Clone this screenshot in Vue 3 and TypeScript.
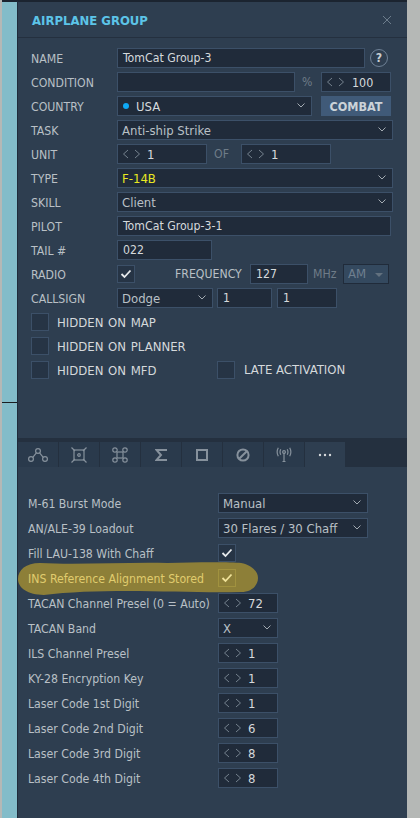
<script setup lang="ts">
const rows2 = [
  { label: "TACAN Band", kind: "select", value: "X" },
  { label: "ILS Channel Presel", kind: "spin", value: "1" },
  { label: "KY-28 Encryption Key", kind: "spin", value: "1" },
  { label: "Laser Code 1st Digit", kind: "spin", value: "1" },
  { label: "Laser Code 2nd Digit", kind: "spin", value: "6" },
  { label: "Laser Code 3rd Digit", kind: "spin", value: "8" },
  { label: "Laser Code 4th Digit", kind: "spin", value: "8" },
];
const hiddenRows = ["HIDDEN ON MAP", "HIDDEN ON PLANNER"];
</script>

<template>
  <div class="page">
    <div class="rail"></div>
    <div class="tick"></div>
    <main class="panel">
      <header class="head">
        <h1>AIRPLANE GROUP</h1>
        <svg class="close" width="10" height="10" viewBox="0 0 10 10"><path d="M1 1l8 8M9 1l-8 8" /></svg>
      </header>

      <section class="form">
        <div class="row">
          <label>NAME</label>
          <div class="field txt" style="width: 248px">TomCat Group-3</div>
          <span class="help">?</span>
        </div>
        <div class="row">
          <label>CONDITION</label>
          <div class="field" style="width: 178px"></div>
          <span class="unit pct">%</span>
          <div class="field spin" style="width: 70px">
            <svg width="18" height="10" viewBox="0 0 18 10"><path d="M5 1L0.5 5L5 9M12 1L16.5 5L12 9" /></svg>
            <span class="spin-val wide">100</span>
          </div>
        </div>
        <div class="row">
          <label>COUNTRY</label>
          <div class="field sel" style="width: 195px">
            <i class="dot"></i><span class="usa">USA</span>
            <svg class="chev" width="8" height="5" viewBox="0 0 8 5"><path d="M0.5 0.5L4 4L7.5 0.5" /></svg>
          </div>
          <button class="combat">COMBAT</button>
        </div>
        <div class="row">
          <label>TASK</label>
          <div class="field sel" style="width: 276px">
            Anti-ship Strike
            <svg class="chev" width="8" height="5" viewBox="0 0 8 5"><path d="M0.5 0.5L4 4L7.5 0.5" /></svg>
          </div>
        </div>
        <div class="row">
          <label>UNIT</label>
          <div class="field spin" style="width: 90px">
            <svg width="18" height="10" viewBox="0 0 18 10"><path d="M5 1L0.5 5L5 9M12 1L16.5 5L12 9" /></svg>
            <span class="spin-val">1</span>
          </div>
          <span class="unit of">OF</span>
          <div class="field spin" style="width: 90px">
            <svg width="18" height="10" viewBox="0 0 18 10"><path d="M5 1L0.5 5L5 9M12 1L16.5 5L12 9" /></svg>
            <span class="spin-val">1</span>
          </div>
        </div>
        <div class="row">
          <label>TYPE</label>
          <div class="field sel yellow" style="width: 276px">
            F-14B
            <svg class="chev" width="8" height="5" viewBox="0 0 8 5"><path d="M0.5 0.5L4 4L7.5 0.5" /></svg>
          </div>
        </div>
        <div class="row">
          <label>SKILL</label>
          <div class="field sel" style="width: 276px">
            Client
            <svg class="chev" width="8" height="5" viewBox="0 0 8 5"><path d="M0.5 0.5L4 4L7.5 0.5" /></svg>
          </div>
        </div>
        <div class="row">
          <label>PILOT</label>
          <div class="field txt" style="width: 274px">TomCat Group-3-1</div>
        </div>
        <div class="row">
          <label>TAIL #</label>
          <div class="field txt" style="width: 95px">022</div>
        </div>
        <div class="row">
          <label>RADIO</label>
          <div class="check">
            <svg width="12" height="10" viewBox="0 0 12 10"><path d="M1.5 5L4.5 8L10.5 1.5" /></svg>
          </div>
          <span class="unit freq">FREQUENCY</span>
          <div class="field txt" style="width: 58px">127</div>
          <span class="unit mhz">MHz</span>
          <div class="am">AM<i></i></div>
        </div>
        <div class="row">
          <label>CALLSIGN</label>
          <div class="field sel" style="width: 96px">
            Dodge
            <svg class="chev" width="8" height="5" viewBox="0 0 8 5"><path d="M0.5 0.5L4 4L7.5 0.5" /></svg>
          </div>
          <div class="field txt" style="width: 55px; margin-left: 4px">1</div>
          <div class="field txt" style="width: 60px; margin-left: 5px">1</div>
        </div>
        <div v-for="name in hiddenRows" :key="name" class="row flag">
          <div class="check"></div>
          <span>{{ name }}</span>
        </div>
        <div class="row flag">
          <div class="check"></div>
          <span class="mfd">HIDDEN ON MFD</span>
          <div class="check late"></div>
          <span class="late-text">LATE ACTIVATION</span>
        </div>
      </section>

      <nav class="tabs">
        <div class="tab">
          <svg width="20" height="14" viewBox="0 0 20 14"><circle cx="3" cy="11" r="2.4" /><circle cx="10" cy="3" r="2.4" /><circle cx="17" cy="11" r="2.4" /><path d="M4.8 9.3L8.4 4.8M11.6 4.8L15.2 9.3" /></svg>
        </div>
        <div class="tab">
          <svg width="16" height="16" viewBox="0 0 16 16"><rect x="3" y="3" width="10" height="10" /><circle cx="8" cy="8" r="1.3" /><path d="M0.5 0.5L4 4M15.5 0.5L12 4M0.5 15.5L4 12M15.5 15.5L12 12" /></svg>
        </div>
        <div class="tab">
          <svg width="16" height="16" viewBox="0 0 16 16"><rect x="5" y="5" width="6" height="6" /><circle cx="3" cy="3" r="2.2" /><circle cx="13" cy="3" r="2.2" /><circle cx="3" cy="13" r="2.2" /><circle cx="13" cy="13" r="2.2" /></svg>
        </div>
        <div class="tab">
          <svg width="12" height="12" viewBox="0 0 12 12"><path class="heavy" d="M11 2V1H1.5L6 6L1.5 11H11V10" /></svg>
        </div>
        <div class="tab">
          <svg width="12" height="12" viewBox="0 0 12 12"><rect class="heavy" x="1" y="1" width="10" height="10" /></svg>
        </div>
        <div class="tab">
          <svg width="14" height="14" viewBox="0 0 14 14"><circle class="heavy" cx="7" cy="7" r="5.6" /><path class="heavy" d="M3.2 10.8L10.8 3.2" /></svg>
        </div>
        <div class="tab">
          <svg width="16" height="15" viewBox="0 0 16 15"><circle cx="8" cy="5" r="1.4" /><path d="M8 6V14.5M6.5 14.5H9.5M4.8 2.2C3.8 4 3.8 6 4.8 7.8M11.2 2.2C12.2 4 12.2 6 11.2 7.8M2.3 0.8C0.8 3.5 0.8 6.5 2.3 9.2M13.7 0.8C15.2 3.5 15.2 6.5 13.7 9.2" /></svg>
        </div>
        <div class="tab active">
          <svg width="14" height="4" viewBox="0 0 14 4"><circle cx="2" cy="2" r="1.2" /><circle cx="7" cy="2" r="1.2" /><circle cx="12" cy="2" r="1.2" /></svg>
        </div>
      </nav>

      <section class="opts">
        <svg class="blob" width="240" height="33" viewBox="0 0 241 33">
          <path d="M0 17C0 8 8 1 22 1C60 3 110 0 150 1C180 0 215 0 224 1C234 3 241 9 241 16C241 24 234 30 224 30C190 31 150 29 110 29C80 29 50 30 26 33C10 33 0 26 0 17Z" />
        </svg>
        <div class="opt">
          <label>M-61 Burst Mode</label>
          <div class="field sel" style="width: 150px">
            Manual
            <svg class="chev" width="8" height="5" viewBox="0 0 8 5"><path d="M0.5 0.5L4 4L7.5 0.5" /></svg>
          </div>
        </div>
        <div class="opt">
          <label>AN/ALE-39 Loadout</label>
          <div class="field sel" style="width: 150px">
            30 Flares / 30 Chaff
            <svg class="chev" width="8" height="5" viewBox="0 0 8 5"><path d="M0.5 0.5L4 4L7.5 0.5" /></svg>
          </div>
        </div>
        <div class="opt">
          <label>Fill LAU-138 With Chaff</label>
          <div class="check">
            <svg width="12" height="10" viewBox="0 0 12 10"><path d="M1.5 5L4.5 8L10.5 1.5" /></svg>
          </div>
        </div>
        <div class="opt marked">
          <label>INS Reference Alignment Stored</label>
          <div class="check">
            <svg width="12" height="10" viewBox="0 0 12 10"><path d="M1.5 5L4.5 8L10.5 1.5" /></svg>
          </div>
        </div>
        <div class="opt">
          <label>TACAN Channel Presel (0 = Auto)</label>
          <div class="field spin" style="width: 60px">
            <svg width="18" height="10" viewBox="0 0 18 10"><path d="M5 1L0.5 5L5 9M12 1L16.5 5L12 9" /></svg>
            <span class="spin-val">72</span>
          </div>
        </div>
        <div v-for="r in rows2" :key="r.label" class="opt">
          <label>{{ r.label }}</label>
          <div v-if="r.kind === 'select'" class="field sel" style="width: 60px">
            {{ r.value }}
            <svg class="chev" width="8" height="5" viewBox="0 0 8 5"><path d="M0.5 0.5L4 4L7.5 0.5" /></svg>
          </div>
          <div v-else class="field spin" style="width: 60px">
            <svg width="18" height="10" viewBox="0 0 18 10"><path d="M5 1L0.5 5L5 9M12 1L16.5 5L12 9" /></svg>
            <span class="spin-val">{{ r.value }}</span>
          </div>
        </div>
      </section>
    </main>
  </div>
</template>

<style>
html,
body {
  margin: 0;
  background: #b5b8b6;
}
</style>

<style scoped>
.page {
  position: relative;
  display: flex;
  width: 420px;
  height: 818px;
  overflow: hidden;
  padding-left: 2px;
  box-sizing: border-box;
  background: #b5b8b6;
  font-family: "DejaVu Sans Condensed", "DejaVu Sans", sans-serif;
  font-size: 12.2px;
  color: #b9c0c6;
}
.rail {
  width: 15px;
  box-sizing: border-box;
  background: #83bcc9;
  border-top: 2px solid #1b2430;
}
.tick {
  position: absolute;
  left: 2px;
  top: 402px;
  width: 15px;
  height: 1px;
  background: #1a1d20;
}
.panel {
  position: relative;
  width: 390px;
  height: 818px;
  box-sizing: border-box;
  border-top: 2px solid #1b2430;
  border-left: 1px solid #1f2b3a;
  background: #2e3e50;
}
.head {
  display: flex;
  align-items: center;
  justify-content: space-between;
  height: 35px;
  padding: 0 15px 0 14px;
  border-bottom: 1px solid #24303f;
}
.head h1 {
  margin: 0;
  padding-top: 1px;
  font-size: 13px;
  font-weight: 700;
  color: #5cc4e8;
}
.close {
  fill: none;
  stroke: #6d7d8c;
}
.form {
  display: flex;
  flex-direction: column;
  gap: 4px;
  padding: 10px 0 0 13px;
}
.row {
  display: flex;
  align-items: center;
  height: 20px;
}
.row > label {
  width: 86px;
  flex: none;
  padding-top: 1px;
}
.field {
  position: relative;
  display: flex;
  align-items: center;
  flex: none;
  height: 20px;
  box-sizing: border-box;
  padding-left: 5px;
  border: 1px solid #3c5068;
  background: #202b3a;
  color: #d5d9dc;
  white-space: nowrap;
}
.sel {
  padding-left: 4px;
  font-size: 13px;
  color: #b9c0c6;
}
.yellow {
  color: #e8e822;
}
.chev {
  position: absolute;
  right: 6px;
  top: 6px;
  fill: none;
  stroke: #a3abb2;
}
.spin svg {
  flex: none;
  fill: none;
  stroke: #75828e;
}
.spin-val {
  margin-left: 6px;
  font-size: 13px;
}
.spin-val.wide {
  margin-left: 7px;
  font-size: 12.4px;
}
.help {
  width: 16px;
  height: 16px;
  margin-left: 5px;
  border: 1px solid #6e8196;
  border-radius: 50%;
  text-align: center;
  line-height: 16px;
  font-weight: 700;
  color: #c9ced2;
}
.unit {
  color: #6f7c88;
}
.pct {
  width: 26px;
  text-indent: 7px;
}
.of {
  width: 34px;
  text-indent: 7px;
}
.dot {
  width: 6px;
  height: 6px;
  margin: 0 7px 0 1px;
  border-radius: 50%;
  background: #0ea8f4;
}
.usa {
  color: #d5d9dc;
}
.combat {
  width: 70px;
  height: 20px;
  margin-left: 9px;
  padding: 0;
  border: 0;
  background: #405a78;
  font: 700 12.5px "DejaVu Sans Condensed", "DejaVu Sans", sans-serif;
  color: #ccd3d9;
}
.check {
  display: flex;
  align-items: center;
  justify-content: center;
  flex: none;
  width: 18px;
  height: 18px;
  box-sizing: border-box;
  border: 1px solid #3c5068;
  background: #263445;
}
.check svg {
  fill: none;
  stroke: #e6e9eb;
  stroke-width: 1.8;
}
.freq {
  width: 75px;
  margin-left: 40px;
  color: #b9c0c6;
}
.mhz {
  width: 35px;
  text-indent: 5px;
}
.am {
  position: relative;
  width: 46px;
  height: 20px;
  box-sizing: border-box;
  padding-left: 4px;
  border: 1px solid #202b3a;
  background: #34495f;
  font-size: 13px;
  line-height: 18px;
  color: #6f7f8f;
}
.am i {
  position: absolute;
  right: 5px;
  top: 8px;
  border: 4px solid transparent;
  border-top: 4px solid #62717f;
  border-bottom: 0;
}
.flag span {
  margin-left: 8px;
  font-size: 13px;
  word-spacing: 1px;
  color: #d5d9dc;
}
.flag .mfd {
  width: 160px;
  flex: none;
}
.flag .check.late {
  margin: 0;
}
.flag .late-text {
  position: relative;
  top: -1px;
  margin-left: 9px;
  word-spacing: 0;
}
.tabs {
  position: absolute;
  left: 0;
  right: 0;
  top: 436px;
  display: flex;
  align-items: flex-end;
  height: 29px;
  background: #24303f;
}
.tab {
  display: flex;
  align-items: center;
  justify-content: center;
  width: 40px;
  height: 25px;
  margin-right: 1px;
  background: #2a3a4c;
}
.tab svg {
  fill: none;
  stroke: #86919c;
  stroke-width: 1.2;
}
.tab svg .heavy {
  stroke-width: 2;
}
.tab.active {
  background: #2e3e50;
}
.tab.active svg {
  fill: #d5d9dc;
  stroke: none;
}
.opts {
  position: absolute;
  left: 0;
  right: 0;
  top: 491px;
  display: flex;
  flex-direction: column;
  gap: 5px;
  padding-left: 10px;
}
.blob {
  position: absolute;
  left: 0;
  top: 69px;
  fill: #8d7f38;
}
.opt {
  position: relative;
  display: flex;
  align-items: center;
  height: 20px;
}
.opt > label {
  width: 190px;
  flex: none;
  padding-top: 1px;
  white-space: nowrap;
}
.marked > label {
  color: #e0cc6e;
}
.marked .check {
  border-color: #a1923f;
  background: #8d7f38;
}
.marked .check svg {
  stroke: #f0e39a;
}
</style>
